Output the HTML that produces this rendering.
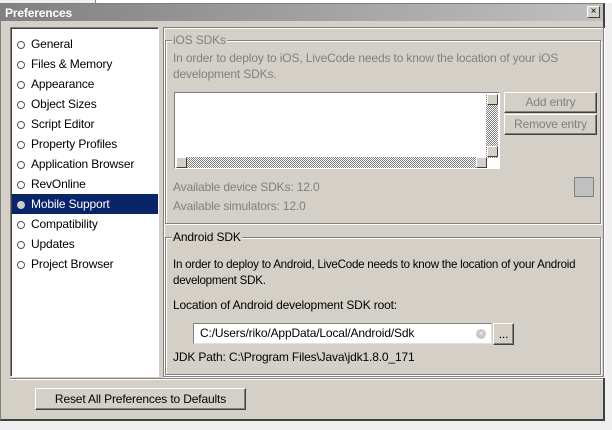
<!DOCTYPE html>
<html><head><style>
*{box-sizing:border-box;margin:0;padding:0}
body{width:612px;height:430px;position:relative;background:#f0f0f0;font-family:"Liberation Sans",sans-serif;font-size:12px;letter-spacing:-0.15px;overflow:hidden;color:#000}
.a{position:absolute}
.win{left:0;top:3px;width:605px;height:418px;background:#d4d0c8;border:1px solid #808080;border-right:2px solid #404040;border-bottom:2px solid #404040}
.title{left:1px;top:4px;width:602px;height:17px;background:linear-gradient(90deg,#808080,#c0c0c0);color:#fff;font-weight:bold;font-size:12px;padding:2px 4px}
.list{left:10px;top:27px;width:149px;height:350px;background:#fff;border:1px solid #808080;border-right-color:#fff;border-bottom-color:#fff;box-shadow:inset 1px 1px 0 #404040}
.it{position:absolute;left:1px;width:146px;height:20px;line-height:20px;padding-left:19px}
.it:before{content:"";position:absolute;left:5px;top:7px;width:6px;height:6px;border-radius:50%;border:1px solid #555;background:#fff}
.sel{background:#0a246a;color:#fff}
.sel:before{background:#ccc;border-color:#ccc}
.grp{border:1px solid #808080;box-shadow:1px 1px 0 #fff,inset 1px 1px 0 #fff}
.gl{background:#d4d0c8;padding:0 1px}
.gray{color:#808080}
.btn{background:#d4d0c8;border:1px solid #fff;border-right-color:#404040;border-bottom-color:#404040;box-shadow:inset -1px -1px 0 #808080;text-align:center}
.dither{background-image:repeating-conic-gradient(#808080 0 25%,#fff 0 50%);background-size:2px 2px}
.sb{width:11px;height:11px;background:#d4d0c8;border:1px solid #fff;border-right-color:#404040;border-bottom-color:#404040}
</style></head><body>
<div class="a" style="left:95px;top:0;width:575px;height:3px;border-left:1px solid #888;background:#fff"></div>
<div class="a win"></div>
<div class="a title">Preferences</div>
<div class="a" style="left:587px;top:6px;width:13px;height:12px;background:#d4d0c8;border:1px solid #fff;border-right-color:#404040;border-bottom-color:#404040;font-size:10px;line-height:9px;text-align:center">×</div>
<div class="a list">
<div class="it" style="top:6px">General</div>
<div class="it" style="top:26px">Files &amp; Memory</div>
<div class="it" style="top:46px">Appearance</div>
<div class="it" style="top:66px">Object Sizes</div>
<div class="it" style="top:86px">Script Editor</div>
<div class="it" style="top:106px">Property Profiles</div>
<div class="it" style="top:126px">Application Browser</div>
<div class="it" style="top:146px">RevOnline</div>
<div class="it sel" style="top:166px">Mobile Support</div>
<div class="it" style="top:186px">Compatibility</div>
<div class="it" style="top:206px">Updates</div>
<div class="it" style="top:226px">Project Browser</div>
</div>
<div class="a" style="left:163px;top:27px;width:441px;height:350px;border:1px solid #808080;box-shadow:inset 1px 1px 0 #fff,1px 1px 0 #fff"></div>
<div class="a grp" style="left:165px;top:40px;width:436px;height:184px"></div>
<div class="a gl gray" style="left:172px;top:33px">iOS SDKs</div>
<div class="a gray" style="left:173px;top:50px;line-height:16px;width:420px">In order to deploy to iOS, LiveCode needs to know the location of your iOS development SDKs.</div>
<div class="a" style="left:174px;top:92px;width:326px;height:77px;background:#fff;border:1px solid #808080;border-right-color:#fff;border-bottom-color:#fff"></div>
<div class="a dither" style="left:486px;top:94px;width:12px;height:64px"></div>
<div class="a sb" style="left:487px;top:94px"></div>
<div class="a sb" style="left:487px;top:146px"></div>
<div class="a dither" style="left:176px;top:157px;width:310px;height:11px"></div>
<div class="a sb" style="left:176px;top:157px"></div>
<div class="a sb" style="left:476px;top:157px"></div>
<div class="a btn gray" style="left:504px;top:92px;width:93px;height:21px;line-height:19px">Add entry</div>
<div class="a btn gray" style="left:504px;top:114px;width:93px;height:21px;line-height:19px">Remove entry</div>
<div class="a gray" style="left:173px;top:180px">Available device SDKs: 12.0</div>
<div class="a gray" style="left:173px;top:199px">Available simulators: 12.0</div>
<div class="a" style="left:574px;top:177px;width:20px;height:20px;background:#c0c0c0;border:1px solid #808080"></div>
<div class="a grp" style="left:165px;top:237px;width:436px;height:138px"></div>
<div class="a gl" style="left:172px;top:230px">Android SDK</div>
<div class="a" style="left:173px;top:257px;line-height:16px;width:428px;font-size:11.6px;letter-spacing:-0.25px">In order to deploy to Android, LiveCode needs to know the location of your Android development SDK.</div>
<div class="a" style="left:173px;top:298px">Location of Android development SDK root:</div>
<div class="a" style="left:193px;top:323px;width:299px;height:21px;background:#fff;border:1px solid #808080;border-right-color:#e0e0e0;border-bottom-color:#e0e0e0;padding:2px 6px;line-height:15px">C:/Users/riko/AppData/Local/Android/Sdk</div>
<div class="a" style="left:476px;top:329px;width:10px;height:10px;border-radius:50%;background:#c8c8c8;color:#fff;font-size:8px;line-height:10px;text-align:center">×</div>
<div class="a btn" style="left:493px;top:323px;width:21px;height:22px;line-height:20px">...</div>
<div class="a" style="left:173px;top:350px">JDK Path: C:\Program Files\Java\jdk1.8.0_171</div>
<div class="a" style="left:10px;top:378px;width:593px;height:2px;border-top:1px solid #808080;border-bottom:1px solid #fff"></div>
<div class="a btn" style="left:35px;top:388px;width:211px;height:22px;line-height:20px;border-color:#fff #404040 #404040 #fff">Reset All Preferences to Defaults</div>
</body></html>
